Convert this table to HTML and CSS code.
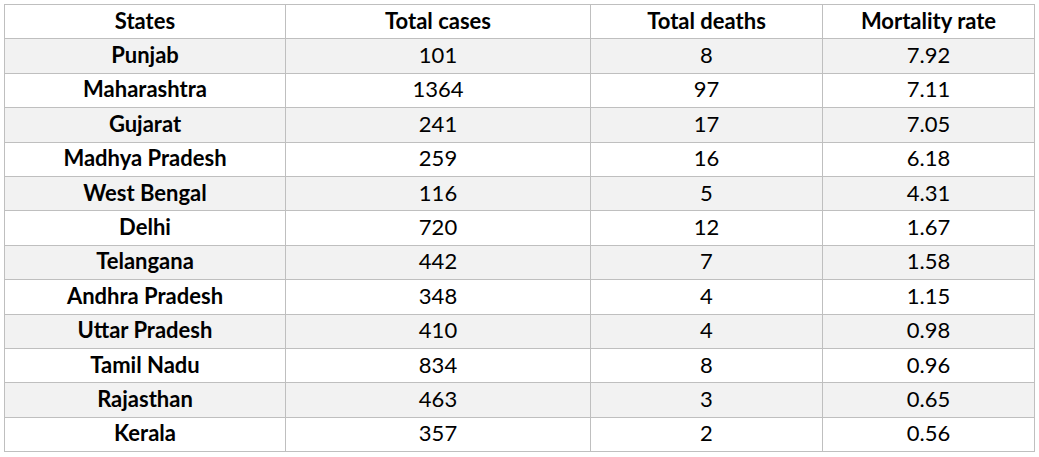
FILE: index.html
```html
<!DOCTYPE html>
<html>
<head>
<meta charset="utf-8">
<link rel="stylesheet" href="styles.css">
</head>
<body>
<table class="data">
  <colgroup>
    <col class="c1"><col class="c2"><col class="c3"><col class="c4">
  </colgroup>
  <thead>
    <tr><th>States</th><th>Total cases</th><th>Total deaths</th><th>Mortality rate</th></tr>
  </thead>
  <tbody>
    <tr><th>Punjab</th><td>101</td><td>8</td><td>7.92</td></tr>
    <tr><th>Maharashtra</th><td>1364</td><td>97</td><td>7.11</td></tr>
    <tr><th>Gujarat</th><td>241</td><td>17</td><td>7.05</td></tr>
    <tr><th>Madhya Pradesh</th><td>259</td><td>16</td><td>6.18</td></tr>
    <tr><th>West Bengal</th><td>116</td><td>5</td><td>4.31</td></tr>
    <tr><th>Delhi</th><td>720</td><td>12</td><td>1.67</td></tr>
    <tr><th>Telangana</th><td>442</td><td>7</td><td>1.58</td></tr>
    <tr><th>Andhra Pradesh</th><td>348</td><td>4</td><td>1.15</td></tr>
    <tr><th>Uttar Pradesh</th><td>410</td><td>4</td><td>0.98</td></tr>
    <tr><th>Tamil Nadu</th><td>834</td><td>8</td><td>0.96</td></tr>
    <tr><th>Rajasthan</th><td>463</td><td>3</td><td>0.65</td></tr>
    <tr><th>Kerala</th><td>357</td><td>2</td><td>0.56</td></tr>
  </tbody>
</table>
</body>
</html>
```

FILE: styles.css
```css
html, body {
  margin: 0;
  padding: 0;
  background: #ffffff;
}
body {
  padding: 4px 0 0 4px;
  font-family: Lato, "Liberation Sans", sans-serif;
  color: #000000;
}
.data {
  border-collapse: collapse;
  table-layout: fixed;
  width: 1030px;
}
.c1 { width: 281px; }
.c2 { width: 305px; }
.c3 { width: 232px; }
.c4 { width: 212px; }
.data th, .data td {
  border: 1px solid #bfbfbf;
  height: 31.4px;
  padding: 0 0 2px 0;
  text-align: center;
  vertical-align: middle;
  font-size: 22px;
  line-height: 22px;
}
.data th { font-weight: 700; }
.data td { font-weight: 400; }
.data tbody tr:nth-child(odd) { background: #f2f2f2; }
```
